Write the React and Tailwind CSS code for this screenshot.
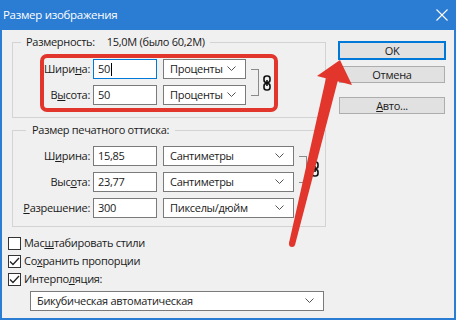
import React from "react";

const Chevron = () => (
  <svg width="9" height="6" viewBox="0 0 9 6" className="shrink-0">
    <polyline points="0.5,0.5 4.5,4.5 8.5,0.5" fill="none" stroke="#555" strokeWidth="1" />
  </svg>
);

const Select = ({ value, width }) => (
  <div
    className={`flex h-[20px] items-center justify-between border border-[#7a7a7a] bg-white pl-[6px] pr-[9px] ${width}`}
  >
    <span>{value}</span>
    <Chevron />
  </div>
);

const Input = ({ value, focused }) => (
  <div
    className={`flex h-[20px] w-[64px] items-center bg-white pl-[4px] border ${
      focused ? "border-[#0078d7]" : "border-[#7a7a7a]"
    }`}
  >
    <span>{value}</span>
    {focused && <span className="ml-[1px] h-[13px] w-px bg-black" />}
  </div>
);

const Row = ({ label, value, unit, focused, selectWidth }) => (
  <div className="flex items-center">
    <div className="w-[80px] pr-[3px] text-right">{label}</div>
    <Input value={value} focused={focused} />
    <div className="ml-[6px]">
      <Select value={unit} width={selectWidth} />
    </div>
  </div>
);

const Link = () => (
  <svg width="8" height="16" viewBox="0 0 8 16">
    <rect x="1" y="1" width="6" height="6.5" rx="2.5" fill="none" stroke="#111" strokeWidth="1.6" />
    <rect x="1" y="8.5" width="6" height="6.5" rx="2.5" fill="none" stroke="#111" strokeWidth="1.6" />
    <line x1="4" y1="5" x2="4" y2="11" stroke="#111" strokeWidth="1.6" />
  </svg>
);

const Bracket = () => (
  <div className="h-[27px] w-[8px] border-y border-r border-[#8a8a8a]" />
);

const Check = ({ checked, children }) => (
  <div className="flex h-[18px] items-center">
    <div className="flex h-[13px] w-[13px] items-center justify-center border border-[#333] bg-white">
      {checked && (
        <svg width="11" height="9" viewBox="0 0 11 9">
          <polyline points="1,4.5 4,7.5 10,1" fill="none" stroke="#222" strokeWidth="1.3" />
        </svg>
      )}
    </div>
    <span className="ml-[3px]">{children}</span>
  </div>
);

const Button = ({ children, primary }) => (
  <div
    className={`flex h-[17px] w-[106px] items-center justify-center bg-[#e1e1e1] border ${
      primary ? "border-[#0078d7] outline outline-1 outline-[#0078d7]" : "border-[#adadad]"
    }`}
  >
    {children}
  </div>
);

export default function App() {
  return (
    <div
      className="relative h-[320px] w-[456px] overflow-hidden bg-[#f0f0f0] text-[11px] leading-[16px] tracking-[-0.3px] text-[#1a1a1a]"
      style={{ fontFamily: '"Open Sans", "Liberation Sans", sans-serif' }}
    >
      <div className="flex h-[30px] items-center justify-between bg-[#2b7cd3] pl-[3px] pr-[8px] text-[11.5px] text-white">
        <span>Размер изображения</span>
        <svg width="12" height="12" viewBox="0 0 12 12">
          <line x1="0.5" y1="0.5" x2="11.5" y2="11.5" stroke="#fff" strokeWidth="1.1" />
          <line x1="11.5" y1="0.5" x2="0.5" y2="11.5" stroke="#fff" strokeWidth="1.1" />
        </svg>
      </div>

      <div className="flex h-[290px] border-x-2 border-b-2 border-[#2b7cd3]">
        <div className="w-[324px] pl-[6px] pt-[4px]">
          <fieldset className="ml-[4px] h-[84px] border border-[#d3d3d3]">
            <legend className="ml-[8px] flex px-[5px]">
              <span>Размерность:</span>
              <span className="ml-[12px]">15,0M (было 60,2M)</span>
            </legend>
            <div className="flex items-center pt-[9px]">
              <div className="flex flex-col gap-[6px]">
                <Row
                  label={<>Шири<u>н</u>а:</>}
                  value="50"
                  unit="Проценты"
                  focused
                  selectWidth="w-[83px]"
                />
                <Row label={<>В<u>ы</u>сота:</>} value="50" unit="Проценты" selectWidth="w-[83px]" />
              </div>
              <div className="ml-[5px]">
                <Bracket />
              </div>
              <div className="ml-[4px] mt-[2px]">
                <Link />
              </div>
            </div>
          </fieldset>

          <fieldset className="ml-[4px] mt-[4px] h-[105px] border border-[#d3d3d3]">
            <legend className="ml-[13px] px-[6px]">Размер печатного оттиска:</legend>
            <div className="flex pt-[8px]">
              <div className="flex flex-col gap-[6px]">
                <Row
                  label={<>Ш<u>и</u>рина:</>}
                  value="15,85"
                  unit="Сантиметры"
                  selectWidth="w-[131px]"
                />
                <Row
                  label={<>Выс<u>о</u>та:</>}
                  value="23,77"
                  unit="Сантиметры"
                  selectWidth="w-[131px]"
                />
                <Row
                  label={<><u>Р</u>азрешение:</>}
                  value="300"
                  unit="Пикселы/дюйм"
                  selectWidth="w-[131px]"
                />
              </div>
              <div className="ml-[5px] mt-[10px]">
                <Bracket />
              </div>
              <div className="ml-[4px] mt-[15px]">
                <Link />
              </div>
            </div>
          </fieldset>

          <div className="mt-[7px] flex flex-col">
            <Check>
              Мас<u>ш</u>табировать стили
            </Check>
            <Check checked>
              Со<u>х</u>ранить пропорции
            </Check>
            <Check checked>
              Интерпо<u>л</u>яция:
            </Check>
          </div>
          <div className="ml-[22px] mt-[3px]">
            <Select value="Бикубическая автоматическая" width="w-[294px]" />
          </div>
        </div>

        <div className="ml-[13px] flex flex-col pt-[12px]">
          <Button primary>OK</Button>
          <div className="mt-[7px]">
            <Button>Отмена</Button>
          </div>
          <div className="mt-[14px]">
            <Button>
              <span>
                <u>А</u>вто...
              </span>
            </Button>
          </div>
        </div>
      </div>

      <div className="absolute left-[40px] top-[54px] h-[58px] w-[238px] rounded-[7px] border-4 border-[#e2352b]" />

      <svg className="absolute left-0 top-0" width="456" height="320" viewBox="0 0 456 320">
        <polygon points="289,243 295,245 338,80 326,78" fill="#e2352b" />
        <circle cx="292" cy="244" r="3" fill="#e2352b" />
        <polygon points="340,60 317,76 352,85" fill="#e2352b" />
      </svg>
    </div>
  );
}
